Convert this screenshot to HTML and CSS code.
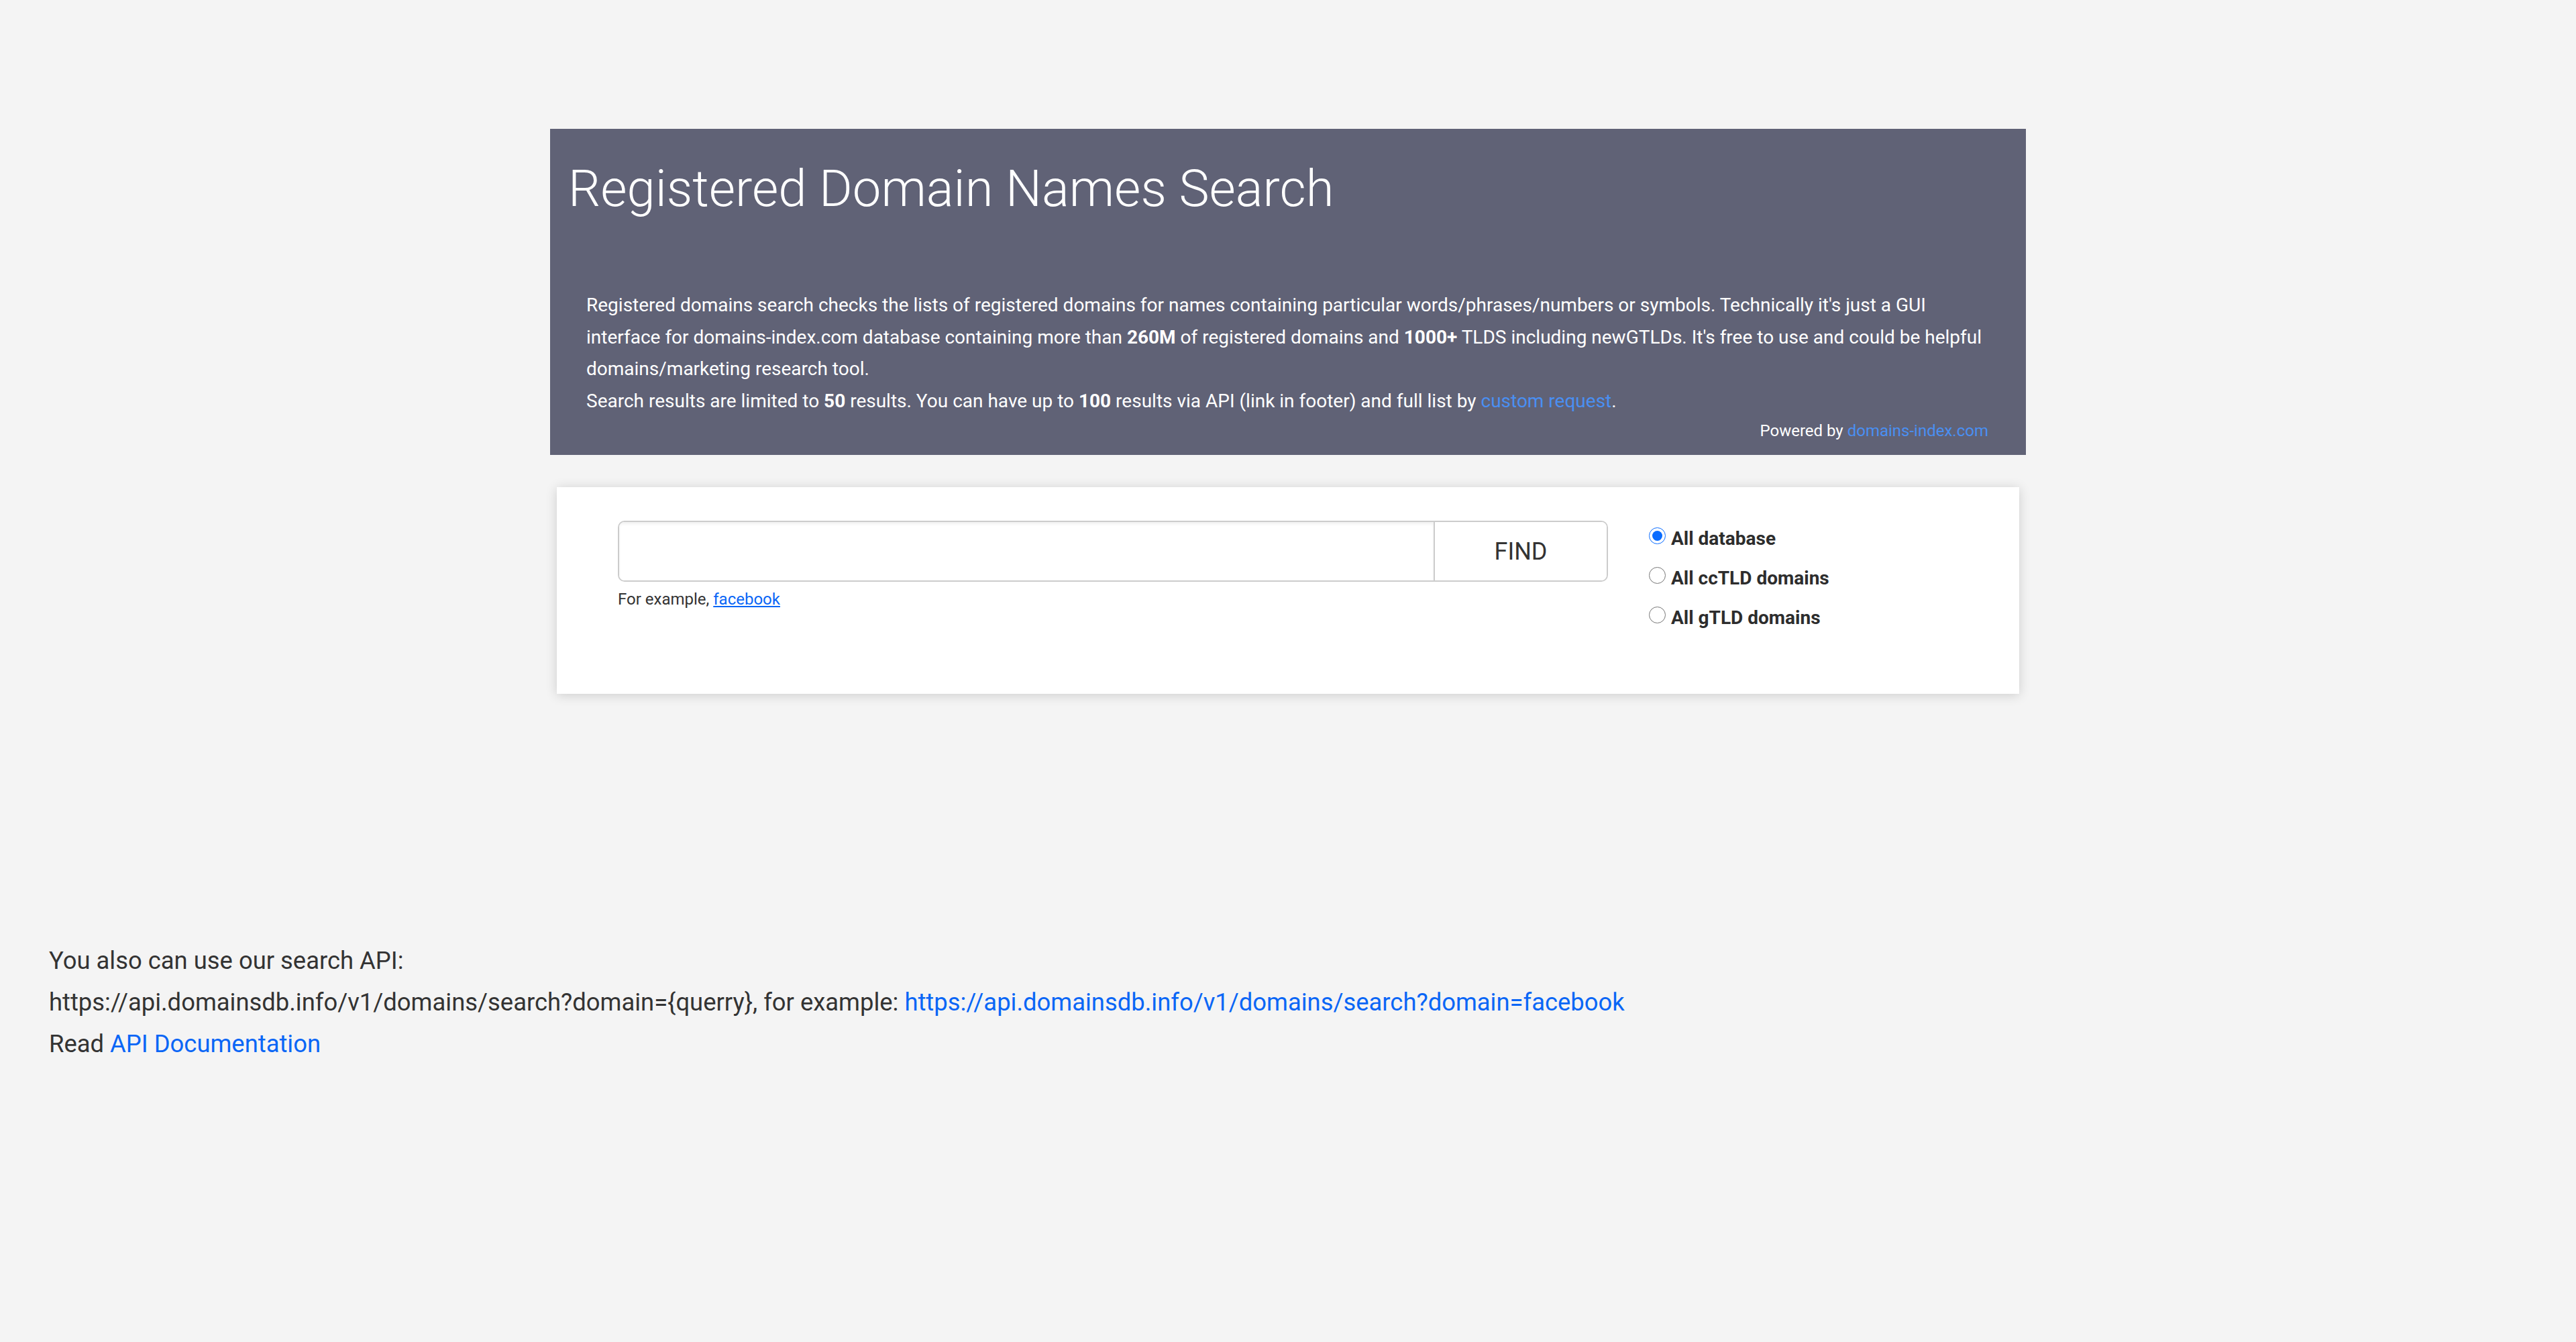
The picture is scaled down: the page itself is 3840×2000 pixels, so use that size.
FILE: index.html
```html
<!DOCTYPE html>
<html lang="en">
<head>
<meta charset="utf-8">
<title>Registered Domain Names Search</title>
<link rel="stylesheet" href="styles.css">
</head>
<body>
<main class="page">
  <header class="hero">
    <h1 class="hero-title">Registered Domain Names Search</h1>
    <div class="hero-body">
      <p class="hero-text">Registered domains search checks the lists of registered domains for names containing particular words/phrases/numbers or symbols. Technically it's just a GUI interface for domains-index.com database containing more than <b>260M</b> of registered domains and <b>1000+</b> TLDS including newGTLDs. It's free to use and could be helpful domains/marketing research tool.<br>Search results are limited to <b>50</b> results. You can have up to <b>100</b> results via API (link in footer) and full list by <a class="hero-link" href="#">custom request</a>.</p>
      <p class="powered">Powered by <a class="hero-link" href="#">domains-index.com</a></p>
    </div>
  </header>
  <section class="search-card">
    <div class="search-main">
      <div class="input-group">
        <input class="search-input" type="text" aria-label="Domain">
        <button class="find-btn" type="button">FIND</button>
      </div>
      <div class="hint">For example, <a class="hint-link" href="#">facebook</a></div>
    </div>
    <div class="scope">
      <label class="scope-row"><input class="scope-radio" type="radio" name="scope" checked><span>All database</span></label>
      <label class="scope-row"><input class="scope-radio" type="radio" name="scope"><span>All ccTLD domains</span></label>
      <label class="scope-row"><input class="scope-radio" type="radio" name="scope"><span>All gTLD domains</span></label>
    </div>
  </section>
</main>
<footer class="api-info">
  <div class="api-line">You also can use our search API:</div>
  <div class="api-line">https://api.domainsdb.info/v1/domains/search?domain={querry}, for example: <a class="api-link" href="#">https://api.domainsdb.info/v1/domains/search?domain=facebook</a></div>
  <div class="api-line">Read <a class="api-link" href="#">API Documentation</a></div>
</footer>
</body>
</html>
```
FILE: styles.css
```css
html, body {
  margin: 0;
  padding: 0;
}
body {
  background: #f4f4f4;
  font-family: Roboto, "Liberation Sans", Arial, sans-serif;
  color: #333;
  line-height: 1.7;
}
.page {
  width: 2200px;
  margin: 0 auto;
  padding-top: 192px;
}
.hero {
  background: #606276;
  color: #fff;
  padding: 0 56px 16px 27px;
}
.hero-title {
  margin: 0;
  padding-top: 44px;
  font-size: 76px;
  font-weight: 300;
  line-height: 1.2;
}
.hero-body {
  padding-left: 27px;
  margin-top: 104px;
}
.hero-text {
  margin: 0;
  font-size: 28px;
  line-height: 1.7;
}
.hero-text b {
  font-weight: 700;
}
.hero-link {
  color: #4a8ff2;
  text-decoration: none;
}
.powered {
  margin: 0;
  text-align: right;
  font-size: 24px;
  line-height: 1.7;
}
.search-card {
  width: 2180px;
  margin: 48px auto 0;
  background: #fff;
  box-shadow: 0 2px 16px rgba(0, 0, 0, 0.16);
  display: flex;
  align-items: flex-start;
  padding-bottom: 84px;
}
.search-main {
  margin-left: 91px;
  margin-top: 50px;
  width: 1476px;
}
.input-group {
  display: flex;
  height: 91px;
  box-sizing: border-box;
  border: 2px solid #cccccc;
  border-radius: 10px;
  overflow: hidden;
}
.search-input {
  flex: 1;
  border: 0;
  margin: 0;
  padding: 0 20px;
  font-size: 36px;
  font-family: inherit;
  background: #fff;
  box-shadow: inset 0 3px 4px rgba(0, 0, 0, 0.06);
  outline: none;
}
.find-btn {
  width: 258px;
  border: 0;
  border-left: 2px solid #cccccc;
  background: #fff;
  margin: 0;
  padding: 0;
  font-family: inherit;
  font-size: 36px;
  font-weight: 400;
  color: #333;
  cursor: pointer;
}
.hint {
  margin-top: 6px;
  font-size: 24px;
  line-height: 1.7;
  color: #333;
}
.hint-link {
  color: #0a66f6;
  text-decoration: underline;
}
.scope {
  margin-left: 61px;
  margin-top: 47px;
  display: flex;
  flex-direction: column;
}
.scope-row {
  display: flex;
  align-items: flex-start;
  height: 59px;
  font-size: 28px;
  line-height: 59px;
  font-weight: 700;
  color: #2d2d2d;
}
.scope-radio {
  width: 25px;
  height: 25px;
  margin: 13px 8px 0 0;
  accent-color: #0a6cff;
}
.api-info {
  margin-top: 367px;
  padding-left: 73px;
  font-size: 36.4px;
  color: #333;
}
.api-line {
  line-height: 62px;
}
.api-link {
  color: #0a66f6;
  text-decoration: none;
}
```
